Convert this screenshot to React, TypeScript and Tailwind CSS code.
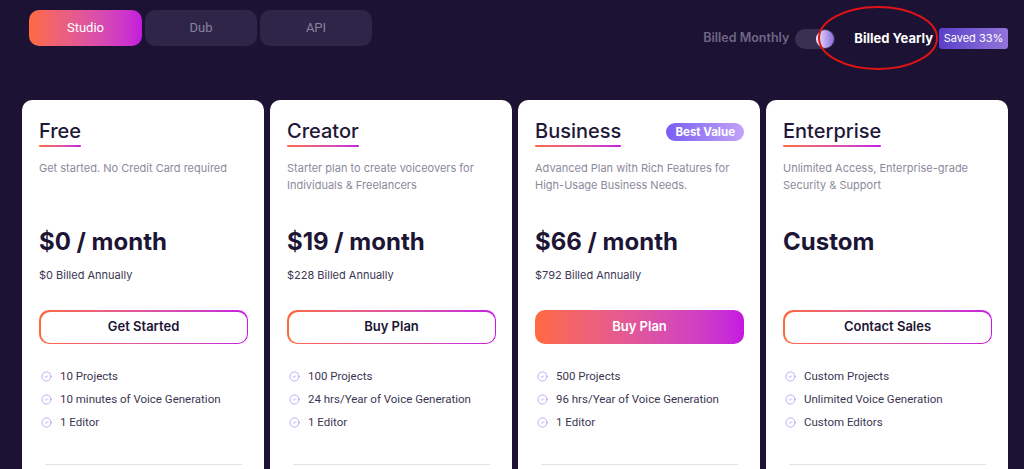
import { CircleCheck } from "lucide-react";

type Plan = {
	name: string;
	desc: string;
	price: string;
	billed?: string;
	cta: string;
	filled?: boolean;
	badge?: string;
	features: string[];
};

const plans: Plan[] = [
	{
		name: "Free",
		desc: "Get started. No Credit Card required",
		price: "$0 / month",
		billed: "$0 Billed Annually",
		cta: "Get Started",
		features: ["10 Projects", "10 minutes of Voice Generation", "1 Editor"],
	},
	{
		name: "Creator",
		desc: "Starter plan to create voiceovers for Individuals & Freelancers",
		price: "$19 / month",
		billed: "$228 Billed Annually",
		cta: "Buy Plan",
		features: ["100 Projects", "24 hrs/Year of Voice Generation", "1 Editor"],
	},
	{
		name: "Business",
		desc: "Advanced Plan with Rich Features for High-Usage Business Needs.",
		price: "$66 / month",
		billed: "$792 Billed Annually",
		cta: "Buy Plan",
		filled: true,
		badge: "Best Value",
		features: ["500 Projects", "96 hrs/Year of Voice Generation", "1 Editor"],
	},
	{
		name: "Enterprise",
		desc: "Unlimited Access, Enterprise-grade Security & Support",
		price: "Custom",
		cta: "Contact Sales",
		features: ["Custom Projects", "Unlimited Voice Generation", "Custom Editors"],
	},
];

function PlanCard({ plan }: { plan: Plan }) {
	return (
		<div className="w-[242px] h-[400px] shrink-0 bg-white rounded-[10px] pt-[18px] pl-[17px] pr-[16px]">
			<div className="flex items-start justify-between">
				<div className="inline-block">
					<div className="text-[20px] leading-[27px] font-medium text-[#1f1838] font-['Inter',sans-serif]">
						{plan.name}
					</div>
					<div className="h-[2px] w-full bg-gradient-to-r from-[#ff6a3d] to-[#c517e0] rounded-full" />
				</div>
				{plan.badge && (
					<div className="mt-[5px] h-[18px] px-[9px] rounded-full bg-gradient-to-r from-[#7a5cf2] to-[#c4a2f9] text-white text-[11.5px] leading-[18px] font-bold font-['Inter',sans-serif]">
						{plan.badge}
					</div>
				)}
			</div>
			<p className="mt-[13px] min-h-[34px] text-[11px] leading-[17px] text-[#8b8a9b] font-['Inter',sans-serif]">
				{plan.desc}
			</p>
			<div className="mt-[32px] text-[24px] leading-[32px] font-bold text-[#1d1535] font-['Inter',sans-serif]">
				{plan.price}
			</div>
			<div className="mt-[8px] h-[18px] text-[11px] leading-[18px] text-[#3b3652] font-['Inter',sans-serif]">
				{plan.billed}
			</div>
			{plan.filled ? (
				<button
					type="button"
					className="mt-[26px] w-full h-[34px] rounded-[10px] bg-gradient-to-r from-[#ff6a3d] to-[#c517e0] text-white text-[13px] font-semibold font-['Inter',sans-serif]"
				>
					{plan.cta}
				</button>
			) : (
				<div className="mt-[26px] w-full h-[34px] rounded-[10px] p-[1.5px] bg-gradient-to-r from-[#ff6a3d] to-[#c517e0]">
					<button
						type="button"
						className="w-full h-full rounded-[9px] bg-white text-[#1d1535] text-[13px] font-semibold font-['Inter',sans-serif]"
					>
						{plan.cta}
					</button>
				</div>
			)}
			<ul className="mt-[23px] flex flex-col gap-[5px]">
				{plan.features.map((f) => (
					<li key={f} className="flex items-center gap-[8px] pl-[2px] text-[11.5px] leading-[18px] text-[#3b3652] font-['Roboto',sans-serif]">
						<CircleCheck size={11} strokeWidth={1.6} className="text-[#a78ef2]" />
						{f}
					</li>
				))}
			</ul>
			<div className="mt-[33px] mx-[6px] h-px bg-[#e3e2ea]" />
		</div>
	);
}

export default function App() {
	return (
		<div className="relative h-[469px] w-full overflow-hidden bg-[#1c1233] font-['Inter',sans-serif]">
			<div className="flex items-start justify-between h-[100px] pl-[29px] pr-[16px]">
				<div className="mt-[10px] flex gap-[3px]">
					<div className="w-[113px] h-[36px] rounded-[10px] bg-gradient-to-r from-[#ff6a3d] to-[#c517dd] flex items-center justify-center text-white text-[13px] font-['Roboto',sans-serif]">
						Studio
					</div>
					<div className="w-[112px] h-[36px] rounded-[10px] bg-[#2e2549] flex items-center justify-center text-[#8a819f] text-[13px] font-['Roboto',sans-serif]">
						Dub
					</div>
					<div className="w-[112px] h-[36px] rounded-[10px] bg-[#2e2549] flex items-center justify-center text-[#8a819f] text-[13px] font-['Roboto',sans-serif]">
						API
					</div>
				</div>
				<div className="mt-[28px] flex items-center h-[21px]">
					<span className="text-[12.5px] font-semibold text-[#6f6786]">Billed Monthly</span>
					<div className="ml-[6px] w-[40px] h-[20px] rounded-full bg-[#3a3052] flex items-center justify-end pr-[1px]">
						<div className="w-[18px] h-[18px] rounded-full bg-gradient-to-r from-[#f3ecff] to-[#8b6bd9]" />
					</div>
					<span className="ml-[19px] text-[13px] font-bold text-white">Billed Yearly</span>
					<div className="ml-[6px] w-[69px] h-[21px] rounded-[3px] bg-gradient-to-r from-[#5b3fc9] to-[#9474da] flex items-center justify-center text-white text-[11px]">
						Saved 33%
					</div>
				</div>
			</div>
			<div className="flex gap-[6px] pl-[22px]">
				{plans.map((p) => (
					<PlanCard key={p.name} plan={p} />
				))}
			</div>
			<svg className="absolute left-[816px] top-[4px]" width="124" height="68" viewBox="0 0 124 68">
				<ellipse cx="62" cy="34" rx="59" ry="31" fill="none" stroke="#e01414" strokeWidth="2" />
			</svg>
		</div>
	);
}
